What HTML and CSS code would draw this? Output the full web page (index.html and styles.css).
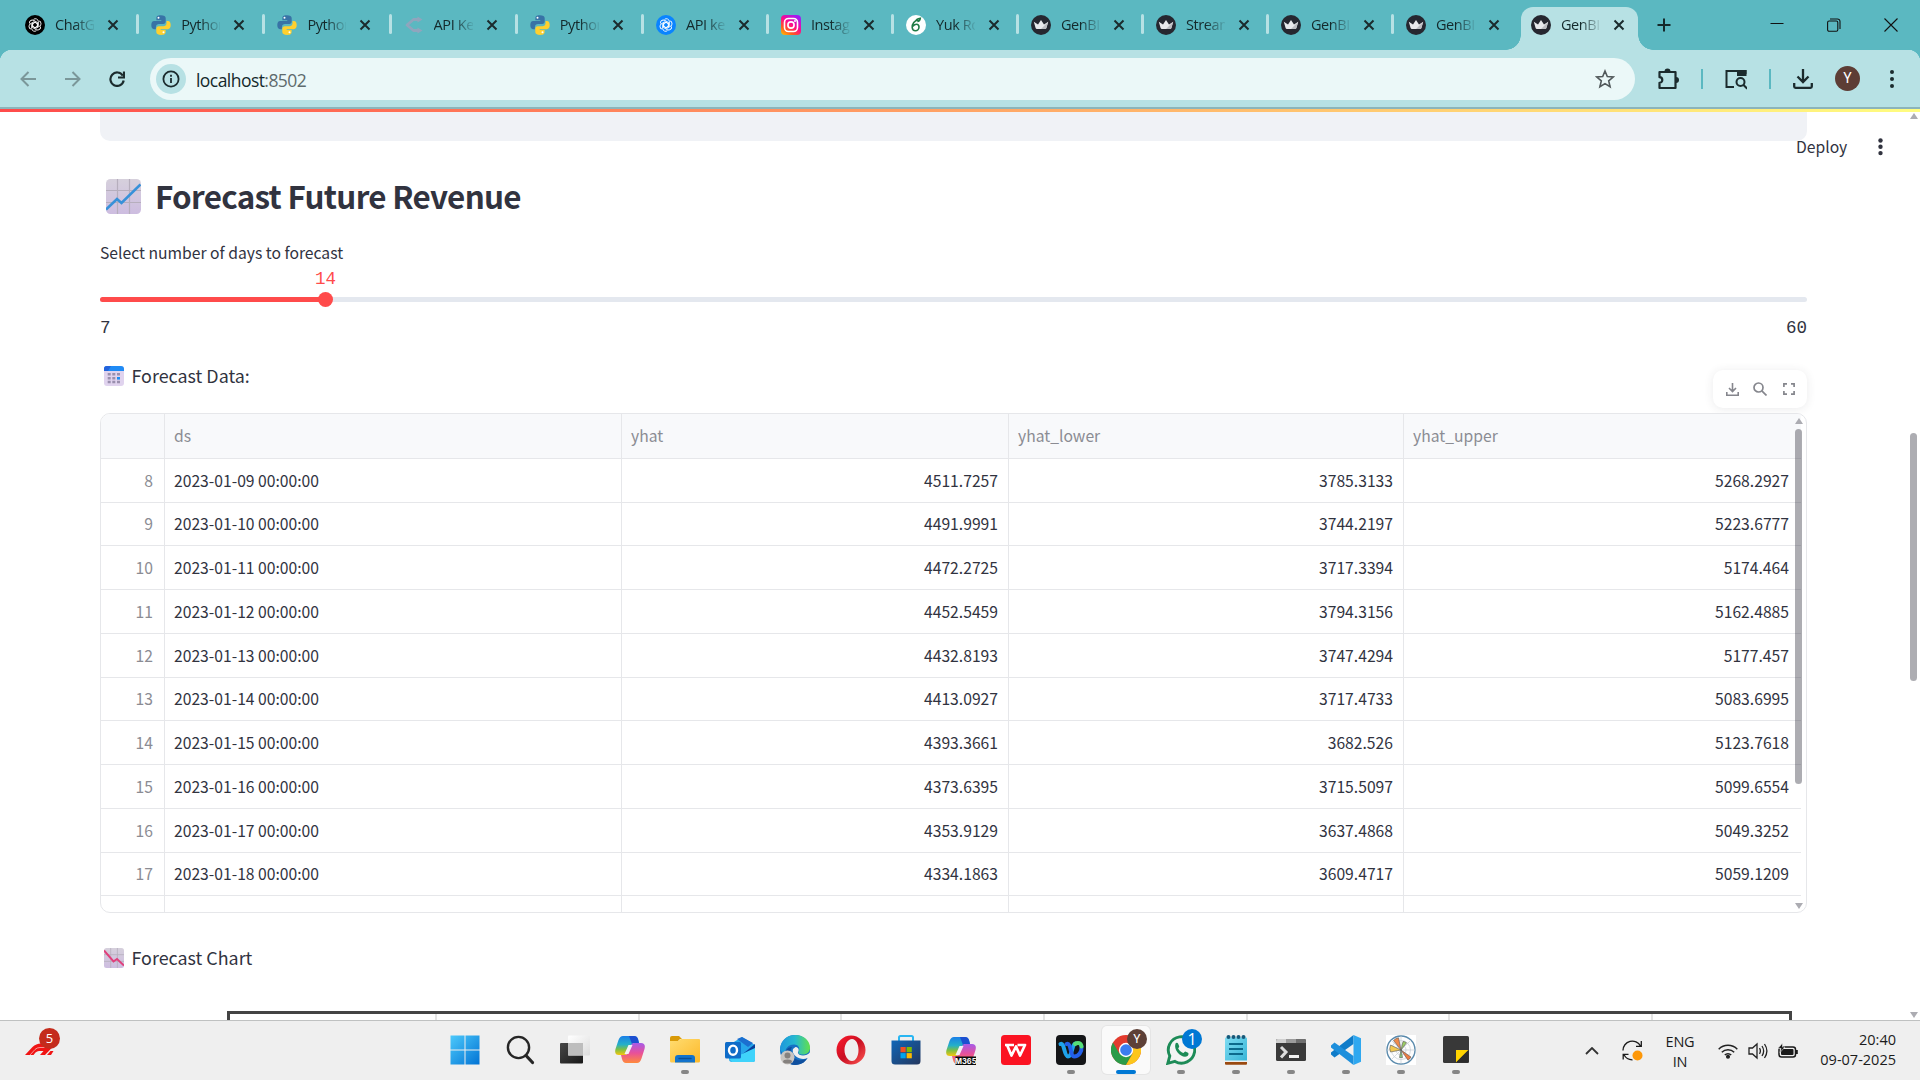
FILE: index.html
```html
<!DOCTYPE html>
<html lang="en">
<head>
<meta charset="utf-8">
<title>GenBI</title>
<link rel="stylesheet" href="styles.css">
</head>
<body>
<svg class="defs" width="0" height="0">
  <defs>
    <linearGradient id="gWin" x1="0" y1="0" x2="1" y2="1"><stop offset="0" stop-color="#4cc9fb"/><stop offset="1" stop-color="#0273d4"/></linearGradient>
    <linearGradient id="gPaper" x1="0" y1="0" x2="0" y2="1"><stop offset="0" stop-color="#d6d0dc"/><stop offset="1" stop-color="#cdbde0"/></linearGradient>
    <linearGradient id="gInsta" x1="0" y1="1" x2=".7" y2="0"><stop offset="0" stop-color="#ffc800"/><stop offset=".3" stop-color="#ff5a1f"/><stop offset=".6" stop-color="#ff0a8c"/><stop offset="1" stop-color="#a01cf5"/></linearGradient>
    <linearGradient id="gCopA" x1="0" y1="0" x2="0" y2="1"><stop offset="0" stop-color="#1a7fe8"/><stop offset=".45" stop-color="#25b0c8"/><stop offset=".7" stop-color="#7bbf45"/><stop offset="1" stop-color="#f6c60d"/></linearGradient>
    <linearGradient id="gCopB" x1="0" y1="0" x2="0" y2="1"><stop offset="0" stop-color="#a65be8"/><stop offset=".5" stop-color="#e8509a"/><stop offset="1" stop-color="#ff8a3c"/></linearGradient>
    <linearGradient id="gFold" x1="0" y1="0" x2="1" y2="1"><stop offset="0" stop-color="#ffdc70"/><stop offset="1" stop-color="#fdb92a"/></linearGradient>
    <linearGradient id="gEdge" x1="0" y1="0" x2="1" y2="0"><stop offset="0" stop-color="#1e96dc"/><stop offset=".5" stop-color="#25b9d0"/><stop offset="1" stop-color="#62e04c"/></linearGradient>
    <linearGradient id="gOpera" x1="0" y1="0" x2="1" y2="1"><stop offset="0" stop-color="#ff1b2d"/><stop offset=".5" stop-color="#c90f22"/><stop offset="1" stop-color="#ff5a55"/></linearGradient>
    <linearGradient id="gStore" x1="0" y1="0" x2="1" y2="1"><stop offset="0" stop-color="#0f66b8"/><stop offset="1" stop-color="#24375e"/></linearGradient>
    <linearGradient id="gNote" x1="0" y1="0" x2="1" y2="1"><stop offset="0" stop-color="#7fdcf2"/><stop offset="1" stop-color="#35b4d6"/></linearGradient>
    <linearGradient id="gGlass" x1="0" y1="0" x2="1" y2="1"><stop offset="0" stop-color="#fff"/><stop offset="1" stop-color="#dcdcdc"/></linearGradient>
    <linearGradient id="gDark" x1="0" y1="0" x2="1" y2="1"><stop offset="0" stop-color="#474747"/><stop offset="1" stop-color="#181818"/></linearGradient>

    <symbol id="close" viewBox="0 0 12 12"><path d="M1.500 1.500l9 9M10.500 1.500l-9 9" stroke="#1b2b2d" stroke-width="2" fill="none"/></symbol>
    <symbol id="knot" viewBox="0 0 20 20"><g fill="none" stroke="#fff" stroke-width="1.200">
      <path id="petal" d="M8 2.500a4 4 0 0 1 6.500 3v5.500L10 13.600 6.500 11.600"/><use href="#petal" transform="rotate(60 10 10)"/><use href="#petal" transform="rotate(120 10 10)"/><use href="#petal" transform="rotate(180 10 10)"/><use href="#petal" transform="rotate(240 10 10)"/><use href="#petal" transform="rotate(300 10 10)"/></g></symbol>
    <symbol id="python" viewBox="0 0 20 20">
      <path fill="#3873a6" d="M9.700.3C6.300.3 5.400 1.600 5.400 3.200v2h4.900v.8H3.200C1.300 6 .3 7.600.3 10.100s1 4.100 2.700 4.100h1.900v-2.300c0-1.700 1.400-3 3.100-3h4.300c1.400 0 2.400-1.100 2.400-2.500V3.200C14.700 1.500 13.200.3 9.700.3z"/>
      <path fill="#ffd02e" d="M10.300 19.900c3.400 0 4.300-1.300 4.300-2.900v-2H9.700v-.8h7.100c1.900 0 2.900-1.600 2.900-4.100S18.700 6 17 6h-1.500v2.300c0 1.700-1.400 3-3.100 3H7.700c-1.400 0-2.400 1.100-2.400 2.500V17c0 1.700 1.500 2.900 5 2.900z"/>
      <circle cx="7.500" cy="2.800" r="1" fill="#fff"/><circle cx="12.500" cy="17.300" r="1" fill="#fff"/></symbol>
    <symbol id="crown" viewBox="0 0 20 20"><circle cx="10" cy="10" r="10" fill="#262730"/><path d="M2.800 6.800l4.200 2.700L10 5l3 4.500 4.200-2.700L15.400 13q-.3 1-1.300 1H5.900q-1 0-1.300-1z" fill="#e9e9ec"/><path d="M10 14h4.100q1 0 1.300-1l1.800-6.200z" fill="#bdbdc2"/></symbol>
    <symbol id="copilot" viewBox="0 0 30 30"><path d="M8 1h11q3 0 4 3l1 4h-4q-3 0-4 3l-3 7q-1 2-3 2H4Q-1 20 .5 14L3.500 5Q5 1 8 1z" fill="url(#gCopA)"/><path d="M14 1h5q3 0 4 3l1 4h-4q-2 0-3 1z" fill="#1c4fd0"/><path d="M22 28H11q-3 0-4-4l-1-4h4q2 0 3-2l3-8q1-2 3-2h7q5 0 3.500 6l-3 9.500Q25 28 22 28z" fill="url(#gCopB)"/><path d="M13.500 10h4l-4 9h-4z" fill="#f3f1f5"/></symbol>
  </defs>
</svg>

<header class="tabstrip">
  <div class="tab wide"><svg class="fav"><circle cx="10" cy="10" r="10"/><use href="#knot" x="2.500" y="2.500" width="15" height="15"/></svg><span>ChatGPT</span><svg class="x"><use href="#close"/></svg></div>
  <div class="tab wide"><svg class="fav"><use href="#python"/></svg><span>Python</span><svg class="x"><use href="#close"/></svg></div>
  <div class="tab wide"><svg class="fav"><use href="#python"/></svg><span>Python</span><svg class="x"><use href="#close"/></svg></div>
  <div class="tab wide"><svg class="fav" viewBox="0 0 20 20"><path d="M15 4.500H9.500L3 10l6.500 5.500H15" fill="none" stroke="#8fa5bd" stroke-width="2.800" stroke-linejoin="round"/><path d="M13.500 1.500l5 3-5 3zM13.500 12.500l5 3-5 3z" fill="#8fa5bd"/></svg><span>API Keys</span><svg class="x"><use href="#close"/></svg></div>
  <div class="tab wide"><svg class="fav"><use href="#python"/></svg><span>Python</span><svg class="x"><use href="#close"/></svg></div>
  <div class="tab"><svg class="fav"><circle cx="10" cy="10" r="10" fill="#0a84ff"/><use href="#knot" x="2.500" y="2.500" width="15" height="15"/></svg><span>API keys</span><svg class="x"><use href="#close"/></svg></div>
  <div class="tab"><svg class="fav"><rect width="20" height="20" rx="4" fill="url(#gInsta)"/><rect x="3.500" y="3.500" width="13" height="13" rx="4" fill="none" stroke="#fff" stroke-width="1.600"/><circle cx="10" cy="10" r="3.100" fill="none" stroke="#fff" stroke-width="1.600"/><circle cx="14" cy="6" r="1" fill="#fff"/></svg><span>Instagram</span><svg class="x"><use href="#close"/></svg></div>
  <div class="tab"><svg class="fav"><circle cx="10" cy="10" r="10" fill="#fff"/><path d="M12.500 4.500C8.500 5.500 6 9 6.200 12.500c.2 2 1.500 3.300 3.200 3.300 2 0 3.600-1.700 3.600-3.700 0-1.700-1.100-2.800-2.600-2.800-1.300 0-2.500.8-3.500 2M9.500 6.500c.5-2 2.500-3 4.800-3.300-.2 1.700-1.300 3.300-3 3.300" fill="none" stroke="#1f7a45" stroke-width="1.600"/></svg><span>Yuk Ro</span><svg class="x"><use href="#close"/></svg></div>
  <div class="tab"><svg class="fav"><use href="#crown"/></svg><span>GenBI</span><svg class="x"><use href="#close"/></svg></div>
  <div class="tab"><svg class="fav"><use href="#crown"/></svg><span>Streamlit</span><svg class="x"><use href="#close"/></svg></div>
  <div class="tab"><svg class="fav"><use href="#crown"/></svg><span>GenBI</span><svg class="x"><use href="#close"/></svg></div>
  <div class="tab last"><svg class="fav"><use href="#crown"/></svg><span>GenBI</span><svg class="x"><use href="#close"/></svg></div>
  <div class="tab active"><svg class="fav"><use href="#crown"/></svg><span>GenBI</span><svg class="x"><use href="#close"/></svg></div>
  <svg class="newtab" width="14" height="14"><path d="M7 .5v13M.5 7h13" stroke="#15292b" stroke-width="2"/></svg>
  <div class="winctl">
    <svg width="14" height="14"><path d="M.5 5.500h13" stroke="#111"/></svg>
    <svg width="14" height="14" fill="none" stroke="#111" stroke-width="1.100"><rect x=".6" y="3" width="10.200" height="10.200" rx="1.500"/><path d="M3 1h7.500a2.500 2.500 0 0 1 2.500 2.500V11"/></svg>
    <svg width="14" height="14"><path d="M.5.5l13 13M13.500.5l-13 13" stroke="#111" stroke-width="1.100"/></svg>
  </div>
</header>

<nav class="toolbar">
  <svg class="nav" width="16" height="16" fill="none" stroke="#7b9799" stroke-width="2"><path d="M8.500 1L1.500 8l7 7M1.500 8H16"/></svg>
  <svg class="nav" width="16" height="16" fill="none" stroke="#7b9799" stroke-width="2"><path d="M7.500 1l7 7-7 7M14.500 8H0"/></svg>
  <svg class="nav" width="16" height="16" fill="none" stroke="#1b2b2d" stroke-width="2.200"><path d="M13.800 4.600A6.700 6.700 0 1 0 14.700 9.500"/><path d="M15 .5v6H9" /></svg>
  <div class="omnibox">
    <svg class="info" width="30" height="30"><circle cx="15" cy="15" r="15" fill="#b7e1e4"/><circle cx="15" cy="15" r="7.600" fill="none" stroke="#1b2b2d" stroke-width="1.800"/><path d="M15 14v5M15 10.700v2" stroke="#1b2b2d" stroke-width="1.800"/></svg>
    <div class="url">localhost<span>:8502</span></div>
    <svg class="star" width="20" height="20" viewBox="0 0 20 20"><path d="M10 2l2.300 5.500 5.900.5-4.500 3.900 1.400 5.800L10 14.600l-5.100 3.100 1.400-5.800L1.800 8l5.900-.5z" fill="none" stroke="#51595b" stroke-width="1.600"/></svg>
  </div>
  <div class="actions">
    <svg width="22" height="22" viewBox="0 0 22 22"><path d="M2.500 4h16v16h-16v-5.200a2.800 2.800 0 0 0 0-5.600z" fill="none" stroke="#1b2b2d" stroke-width="2.200" stroke-linejoin="round"/><path d="M7.500 3.500a3 3 0 0 1 6 0zM19 9a3 3 0 0 1 0 6z" fill="#1b2b2d"/></svg>
    <i></i>
    <svg width="22" height="22" viewBox="0 0 22 22"><path d="M9 19H1.500V3h19v3" fill="none" stroke="#1b2b2d" stroke-width="2"/><path d="M12 2h9.500v6H12z" fill="#1b2b2d"/><circle cx="15.500" cy="14" r="4" fill="none" stroke="#1b2b2d" stroke-width="2"/><path d="M18.300 16.800l4 4" stroke="#1b2b2d" stroke-width="2"/></svg>
    <i></i>
    <svg width="20" height="20"><path d="M10 0v12M4.500 7.500L10 13l5.500-5.500M1.200 14v3.500q0 1.300 1.300 1.300h15q1.300 0 1.300-1.300V14" fill="none" stroke="#1b2b2d" stroke-width="2.300"/></svg>
    <b>Y</b>
    <svg width="6" height="20" fill="#1b2b2d"><circle cx="3" cy="3" r="2"/><circle cx="3" cy="10" r="2"/><circle cx="3" cy="17" r="2"/></svg>
  </div>
</nav>

<main class="page">
  <div class="decor"></div>
  <div class="deploy"><span>Deploy</span><svg width="5" height="18" fill="#31333f"><circle cx="2.500" cy="2.500" r="2.200"/><circle cx="2.500" cy="8.800" r="2.200"/><circle cx="2.500" cy="15.100" r="2.200"/></svg></div>
  <section class="content">
    <div class="prevblock"></div>
    <h2><svg width="35" height="35" viewBox="0 0 35 35"><rect width="35" height="35" rx="4.500" fill="url(#gPaper)"/><path d="M11.500 0v35M23.500 0v35M0 11.500h35M0 23.500h35" stroke="#b6aebd" stroke-width="1.200"/><path d="M0 30.500l11-10.500 4.500 4L34.500 5.500" fill="none" stroke="#3791d9" stroke-width="2.600"/></svg>Forecast Future Revenue</h2>
    <label>Select number of days to forecast</label>
    <div class="slider">
      <div class="value"><span>14</span></div>
      <div class="track"><div class="fill"></div><div class="thumb"></div></div>
      <div class="limits"><span>7</span><span>60</span></div>
    </div>
    <div class="caption"><svg width="20" height="20"><rect width="20" height="20" rx="3" fill="#e0d3ee"/><path d="M0 5V3a3 3 0 0 1 3-3h14a3 3 0 0 1 3 3v2z" fill="#208bf5"/><path d="M0 5V3a3 3 0 0 1 3-3h4L4 5z" fill="#2463dc"/><g fill="#9a8fae"><path d="M3.700 7h3v2.600h-3zM8.300 7h3v2.600h-3zM13 7h3v2.600h-3zM3.700 11h3v2.600h-3zM8.300 11h3v2.600h-3zM3.700 14.800h3v2.400h-3zM8.300 14.800h3v2.400h-3zM13 14.800h3v2.400h-3z"/></g><path d="M13 11h3v2.600h-3z" fill="#1d8bf2"/></svg>Forecast Data:</div>

    <div class="frame">
      <div class="tools">
        <svg width="13" height="13" fill="none" stroke="#85868d" stroke-width="1.600"><path d="M6.500 0v8M3 5l3.500 3.500L10 5M.8 9v3.200h11.400V9"/></svg>
        <svg width="14" height="14" fill="none" stroke="#85868d" stroke-width="1.700"><circle cx="5.500" cy="5.500" r="4.500"/><path d="M8.800 8.800l4.700 4.700"/></svg>
        <svg width="12" height="12" fill="none" stroke="#85868d" stroke-width="1.700"><path d="M.9 4V.9H4M8 .9h3.100V4M11.100 8v3.100H8M4 11.100H.9V8"/></svg>
      </div>
      <div class="grid">
        <div class="row head"><div></div><div>ds</div><div>yhat</div><div>yhat_lower</div><div>yhat_upper</div></div>
        <div class="row"><div>8</div><div>2023-01-09 00:00:00</div><div>4511.7257</div><div>3785.3133</div><div>5268.2927</div></div>
        <div class="row"><div>9</div><div>2023-01-10 00:00:00</div><div>4491.9991</div><div>3744.2197</div><div>5223.6777</div></div>
        <div class="row"><div>10</div><div>2023-01-11 00:00:00</div><div>4472.2725</div><div>3717.3394</div><div>5174.464</div></div>
        <div class="row"><div>11</div><div>2023-01-12 00:00:00</div><div>4452.5459</div><div>3794.3156</div><div>5162.4885</div></div>
        <div class="row"><div>12</div><div>2023-01-13 00:00:00</div><div>4432.8193</div><div>3747.4294</div><div>5177.457</div></div>
        <div class="row"><div>13</div><div>2023-01-14 00:00:00</div><div>4413.0927</div><div>3717.4733</div><div>5083.6995</div></div>
        <div class="row"><div>14</div><div>2023-01-15 00:00:00</div><div>4393.3661</div><div>3682.526</div><div>5123.7618</div></div>
        <div class="row"><div>15</div><div>2023-01-16 00:00:00</div><div>4373.6395</div><div>3715.5097</div><div>5099.6554</div></div>
        <div class="row"><div>16</div><div>2023-01-17 00:00:00</div><div>4353.9129</div><div>3637.4868</div><div>5049.3252</div></div>
        <div class="row"><div>17</div><div>2023-01-18 00:00:00</div><div>4334.1863</div><div>3609.4717</div><div>5059.1209</div></div>
        <div class="row"><div></div><div></div><div></div><div></div><div></div></div>
        <div class="scroll"><i class="up"></i><b></b><i class="down"></i></div>
      </div>
    </div>

    <div class="caption chartcap"><svg width="20" height="20"><rect width="20" height="20" rx="2.500" fill="url(#gPaper)"/><path d="M6.700 0v20M13.400 0v20M0 6.700h20M0 13.400h20" stroke="#b6aebd" stroke-width=".8"/><path d="M0 2.500l9.500 11 3.500-2.500 7 6.500" fill="none" stroke="#e0407c" stroke-width="2"/></svg>Forecast Chart</div>
    <div class="plot"><i></i><i></i><i></i><i></i><i></i><i></i><i></i></div>
  </section>
  <div class="scroll pagescroll"><i class="up"></i><b></b><i class="down"></i></div>
</main>

<footer class="taskbar">
  <div class="widget"><svg width="32" height="12" viewBox="0 0 32 12"><path d="M0 12L7.500 4Q11 .5 16 .5h15L20 12h-5l3.500-4H14q-2 0-3.500 1.500L8.500 12z" fill="#f01414"/><path d="M5 12l5-5.500Q12 4.500 15 4.500h12" fill="none" stroke="#f7b5b5" stroke-width=".8"/><path d="M22 12l3.500-4h3L26 12z" fill="#f01414"/></svg><b>5</b></div>
  <div class="apps">
    <div><svg viewBox="0 0 30 30"><g fill="url(#gWin)"><path d="M.5.5h14v14H.5zM15.500.5h14v14h-14zM.5 15.500h14v14H.5zM15.500 15.500h14v14h-14z"/></g></svg></div>
    <div><svg viewBox="0 0 30 30" fill="none" stroke="#262626"><circle cx="13.500" cy="12.500" r="10.600" stroke-width="2.400"/><path d="M21 20.500l6.500 7" stroke-width="3.200" stroke-linecap="round"/></svg></div>
    <div><svg viewBox="0 0 30 30"><rect x="0" y="8" width="23" height="20.500" rx="1" fill="url(#gDark)"/><rect x="8" y=".5" width="22" height="20" rx="1" fill="url(#gGlass)"/><path d="M8 8h15v12.500H8z" fill="#bdbdbd"/></svg></div>
    <div><svg viewBox="0 0 30 30"><use href="#copilot"/></svg></div>
    <div class="run"><svg viewBox="0 0 30 30"><path d="M0 3q0-2 2-2h7l3 3h-2l-3 3H0z" fill="#d99a08"/><path d="M0 6h8l3-2h18q1 0 1 1v21q0 1.500-1.500 1.500h-27Q0 27.500 0 26z" fill="url(#gFold)"/><path d="M5 27.500V23q0-3 3-3h14q3 0 3 3v4.500z" fill="#1373cc"/><path d="M9 23.500h12" stroke="#0c4f96" stroke-width="1.400" stroke-linecap="round"/></svg></div>
    <div><svg viewBox="0 0 30 30"><path d="M4 10L17 2l13 8v15q0 2-2 2H7q-3 0-3-3z" fill="#27a6ea"/><path d="M12 4l11 8 5-4-11-6z" fill="#1b6fd0"/><path d="M14 22L30 9v5L16 26z" fill="#0a3f9a"/><path d="M4 24l13-5 13-6v12q0 2-2 2H7z" fill="#3fd3fb"/><rect x="0" y="7" width="16" height="16.500" rx="1.500" fill="#0f6cc8"/><ellipse cx="8" cy="15.200" rx="4" ry="4.600" fill="none" stroke="#fff" stroke-width="2.400"/></svg></div>
    <div><svg viewBox="0 0 30 30"><circle cx="15" cy="15" r="15" fill="#1570c4"/><path d="M0 14C1 4 8 0 15.500 0 24 0 30 6 30 12.500c0 4.500-3 7-7 7-4 0-5.500-1.500-4-4 1-3-1-6-5-6-6 0-9 4-9 9C2 17.500.5 16 0 14z" fill="url(#gEdge)"/><path d="M12 12c-3 4-1 11 6 13 4 1 8-1 9-2-1 3-5 7-12 7C8 30 3 24 5 18c1-4 4-6 7-6z" fill="#0f4f9e"/><path d="M15.500 12c3 0 4 3 2.500 5-.5 2 2 3.500 5 3.500 3 0 5.500-1 7.500-3.500V22l-3 1C21 26 11 21 13 14z" fill="#efefef"/><circle cx="7.500" cy="22.500" r="7" fill="#c8c5c2"/><circle cx="7.500" cy="20.500" r="3" fill="#85817e"/><ellipse cx="7.500" cy="26.500" rx="4.500" ry="2" fill="#85817e"/></svg></div>
    <div><svg viewBox="0 0 30 30"><path d="M15 .5a14.500 14.500 0 1 0 0 29 14.500 14.500 0 1 0 0-29zM16 4c4 0 6.500 5 6.500 11S20 26 16 26 8.500 21 8.500 15 12 4 16 4z" fill="url(#gOpera)" fill-rule="evenodd"/></svg></div>
    <div><svg viewBox="0 0 30 30"><path d="M8 8V2.500Q8 1 9.500 1h11Q22 1 22 2.500V8" fill="none" stroke="#29b6f2" stroke-width="2"/><path d="M.5 5.500h29V26q0 3.500-3.500 3.500H4Q.5 29.500.5 26z" fill="url(#gStore)"/><path d="M9.500 12h5.200v5.200H9.500z" fill="#f25022"/><path d="M15.600 12h5.200v5.200h-5.200z" fill="#7fba00"/><path d="M9.500 18.100h5.200v5.200H9.500z" fill="#00a4ef"/><path d="M15.600 18.100h5.200v5.200h-5.200z" fill="#ffb900"/></svg></div>
    <div><svg viewBox="0 0 30 30"><use href="#copilot" y="1"/><rect x="9.500" y="21.500" width="20.500" height="8.500" fill="#0b0b0b"/><text x="19.700" y="28.500" class="m365">M365</text></svg></div>
    <div><svg viewBox="0 0 30 30"><rect width="30" height="30" rx="3.500" fill="#fb1322"/><path d="M4 10h9M6 10l4.500 10.500L15 11.500l4 9L24 10h-7.500" fill="none" stroke="#fff" stroke-width="2.700" stroke-linejoin="round"/></svg></div>
    <div class="run"><svg viewBox="0 0 30 30"><rect width="30" height="30" rx="4" fill="#141517"/><path d="M4.500 9c4-2 3.500 12.500 7.500 12.500 4.500 0 3.500-12 7.500-13" fill="none" stroke="#1fa2ea" stroke-width="4" stroke-linecap="round"/><path d="M10.500 9c5-2 3.500 12.500 7.500 12.500 5 0 8-5 7.500-10" fill="none" stroke="#2360ea" stroke-width="4" stroke-linecap="round"/><path d="M19 9c3-2 6-1 6.500 2.500" fill="none" stroke="#57df78" stroke-width="4" stroke-linecap="round"/></svg></div>
    <div class="run on"><svg viewBox="0 0 30 30"><circle cx="15" cy="15" r="15" fill="#e33b2e"/><path d="M2 7.500A15 15 0 0 0 15 30l6.500-11.300L15 15 8.500 18.800z" fill="#2b9b48"/><path d="M28 7.500A15 15 0 0 1 15 30l6.500-11.300V7.500z" fill="#fcc61c"/><circle cx="15" cy="15" r="7.200" fill="#fff"/><circle cx="15" cy="15" r="5.800" fill="#3b7df0"/></svg><b class="user">Y</b></div>
    <div class="run"><svg viewBox="0 0 30 30"><path d="M1.800 28.300l2-7.300A13.200 13.200 0 1 1 9 26.400z" fill="#f4f4f4" stroke="#1d8b57" stroke-width="2.900"/><path d="M9.500 8.500c1-1.200 2.200-.8 2.700.3l1 2.400c.2.800-.9 1.600-1 2.200 1 2.300 3 3.800 5 4.600.7.100 1.300-1.500 2.200-1.500l2.600 1.300c1 .6.500 2.400-.5 3.200-4.500 3.500-14.500-5-12-12.500z" fill="#1d8b57"/></svg><b class="count">1</b></div>
    <div class="run"><svg viewBox="0 0 30 30"><rect x="4" y="25" width="22" height="4.800" rx="1" fill="#9a4a10"/><rect x="4" y="2.500" width="22" height="24.500" rx="1" fill="url(#gNote)"/><path d="M4 25.500h22v1.500H4z" fill="#eee"/><path d="M8 9h14M8 14h14M8 19h14" stroke="#0c6a8c" stroke-width="2"/><g fill="#15597a"><circle cx="7.500" cy="2" r="2"/><circle cx="12.500" cy="2" r="2"/><circle cx="17.500" cy="2" r="2"/><circle cx="22.500" cy="2" r="2"/></g></svg></div>
    <div class="run"><svg viewBox="0 0 30 30"><rect y="4" width="30" height="22" rx="1.500" fill="#3a3a3a"/><path d="M0 8V5.500Q0 4 1.500 4H10v4z" fill="#d0d0d0"/><path d="M10 4h10v4H10z" fill="#9c9c9c"/><path d="M20 4h8.500Q30 4 30 5.500V8H20z" fill="#6f6f6f"/><path d="M5 12l5 5-5 5.500" fill="none" stroke="#dcdcdc" stroke-width="3"/><path d="M13 21.500h10" stroke="#f2f2f2" stroke-width="3"/></svg></div>
    <div class="run"><svg viewBox="0 0 30 30"><path d="M22.500 0v9L3.500 22.500 0 19.500v-2z" fill="#0f7cc9"/><path d="M22.500 30v-9L3.500 7.500 0 10.500v2z" fill="#1d8fdc"/><path d="M22.500 0L30 3.300v23.400L22.500 30z" fill="#2fa8f0"/></svg></div>
    <div class="run"><svg viewBox="0 0 30 30"><path d="M0 0h30v30H0z" fill="#fff"/><circle cx="15" cy="15" r="14" fill="#fdfdfd" stroke="#5a8aac" stroke-width="1.400"/><g fill="none" stroke="#c4ccd2" stroke-width=".7"><circle cx="15" cy="15" r="9.500"/><circle cx="15" cy="15" r="5"/><path d="M1 15h28M15 1v28M5 5l20 20M25 5L5 25"/></g><g stroke="#555" stroke-width=".6"><path d="M15 15L7.500 5.500Q10 3 12.500 2.800z" fill="#f08a4b"/><path d="M15 15L4.500 17Q3 13.500 4.500 10z" fill="#f2c84f"/><path d="M15 15l10 7q-1 2-3 3.200z" fill="#ee7c42"/><path d="M15 15l2-8.500q2 0 3.500 1.300z" fill="#9cce62"/><path d="M15 15l1.500 7.500h-3z" fill="#8ccf7c"/></g></svg></div>
    <div class="run"><svg viewBox="0 0 30 30"><rect x="2" y="1" width="26" height="27" rx="1.500" fill="#383838"/><path d="M15 15h12.500L15 27.500z" fill="#ffd400"/><path d="M15 27.500L27.500 15v12.500z" fill="#2c2c2c"/></svg></div>
  </div>
  <div class="tray">
    <svg width="14" height="8" class="chev"><path d="M1 7l6-6 6 6" fill="none" stroke="#333" stroke-width="1.800"/></svg>
    <svg width="21" height="21" class="sync"><g fill="none" stroke="#1a1a1a" stroke-width="1.300"><path d="M1 10.500A9.300 9.300 0 0 1 18.500 6M19.300 1v5.300H14M10.500 19.800A9.300 9.300 0 0 1 2 14.800M1.200 19.500v-5.200h5.300"/></g><circle cx="15.500" cy="15.500" r="5" fill="#fd9708"/></svg>
    <div class="lang">ENG<br>IN</div>
    <svg width="20" height="16" class="wifi" fill="none" stroke="#222" stroke-width="1.500"><path d="M.7 6.200a13.200 13.200 0 0 1 18.600 0M3.800 9.200a8.800 8.800 0 0 1 12.400 0M6.800 12a4.500 4.500 0 0 1 6.400 0"/><circle cx="10" cy="13.800" r="1.300" fill="#222"/></svg>
    <svg width="20" height="18" class="vol" fill="none" stroke="#222" stroke-width="1.300"><path d="M1 6h3.500L9 2v14l-4.500-4H1z"/><path d="M11.500 6.200q1.800 2.800 0 5.600M14 4q3.300 5 0 10M16.500 2q4.800 7 0 14"/></svg>
    <svg width="20" height="16" class="bat"><rect x="1" y="4" width="16.500" height="10" rx="2.500" fill="none" stroke="#1a1a1a" stroke-width="1.500"/><rect x="3" y="6" width="12.500" height="6" rx="1" fill="#1a1a1a"/><path d="M18 7h1.800v4H18z" fill="#1a1a1a"/><path d="M4.500 0L0 5.500H3L2 9.500 7 4H4.500z" fill="#1a1a1a" stroke="#efefef" stroke-width=".6"/></svg>
    <div class="clock">20:40<br>09-07-2025</div>
  </div>
</footer>
</body>
</html>
```
FILE: styles.css
```css
* { box-sizing: border-box; }
body {
  margin: 0;
  width: 1920px;
  height: 1080px;
  overflow: hidden;
  display: flex;
  flex-direction: column;
  background: #fff;
  font-family: "Open Sans", "Noto Sans", sans-serif;
}
svg { display: block; flex: none; }
.defs { position: absolute; }

/* Browser tabs */
.tabstrip {
  height: 50px;
  flex: none;
  display: flex;
  background: #5bb8c1;
  padding-left: 15px;
}
.tab {
  position: relative;
  width: 125px;
  height: 43px;
  margin-top: 7px;
  padding-left: 10px;
  display: flex;
  align-items: center;
  flex: none;
}
.tab.wide { width: 126.200px; }
.tab::after {
  content: "";
  position: absolute;
  right: 2px;
  top: 7px;
  width: 3px;
  height: 20px;
  border-radius: 2px;
  background: #b7e1e4;
}
.tab.last::after { display: none; }
.tab > * { margin-bottom: 8px; }
.fav { width: 20px; height: 20px; }
.tab span {
  width: 39px;
  margin-left: 10px;
  overflow: hidden;
  white-space: nowrap;
  font-size: 14.500px;
  line-height: 22px;
  letter-spacing: -.4px;
  color: #14292b;
  -webkit-mask-image: linear-gradient(90deg, #000 50%, transparent 105%);
  mask-image: linear-gradient(90deg, #000 50%, transparent 105%);
}
.x { width: 12px; height: 12px; margin-left: 13px; }
.tab.active {
  width: 117px;
  border-radius: 12px 12px 0 0;
  background: #b7e1e4;
}
.tab.active::before, .tab.active::after {
  content: "";
  display: block;
  position: absolute;
  top: auto;
  bottom: 0;
  width: 15px;
  height: 15px;
  border-radius: 0;
}
.tab.active::before { left: -15px; background: radial-gradient(circle at 0 0, transparent 14.500px, #b7e1e4 15px); }
.tab.active::after { right: -15px; background: radial-gradient(circle at 100% 0, transparent 14.500px, #b7e1e4 15px); }
.newtab { margin: 18px 0 0 19px; }
.winctl { display: flex; gap: 43px; margin: 18px 22px 0 auto; }

/* Address bar */
.toolbar {
  height: 59px;
  flex: none;
  display: flex;
  align-items: center;
  padding: 0 0 0 20px;
  border-bottom: 2px solid #8cb4ba;
  background: radial-gradient(circle at 12px 12px, #b7e1e4 12px, #5bb8c1 12.500px) 0 0 / 12px 12px no-repeat,
    radial-gradient(circle at 0 12px, #b7e1e4 12px, #5bb8c1 12.500px) 100% 0 / 12px 12px no-repeat, #b7e1e4;
}
.nav { margin-right: 29px; }
.nav + .nav { margin-right: 28px; }
.nav:nth-child(3) { margin-right: 25px; }
.omnibox {
  width: 1485px;
  height: 42px;
  border-radius: 21px;
  background: #ebf8f8;
  display: flex;
  align-items: center;
  padding: 0 20px 0 6px;
}
.url { margin: 2px 0 0 10px; font-size: 17.500px; letter-spacing: -.55px; color: #14292b; }
.url span { color: #5e6b6d; }
.star { margin-left: auto; }
.actions { display: flex; align-items: center; gap: 22px; margin-left: 22px; }
.actions i { width: 2px; height: 20px; background: #5bb8c1; }
.actions b {
  width: 25px;
  height: 25px;
  margin-right: 7px;
  border-radius: 50%;
  background: #5d3d35;
  color: #fff;
  font: 400 14px/25px Roboto, sans-serif;
  text-align: center;
}

/* App page */
.page {
  position: relative;
  flex: 1;
  min-height: 0;
  overflow: hidden;
  color: #31333f;
  font-family: "Noto Sans CJK JP", "Noto Sans", sans-serif;
}
.decor { height: 3px; background: linear-gradient(90deg, #ff4b4b, #fffd80); }
.content { width: 1707px; margin-left: 100px; }
.prevblock { height: 29px; background: #f0f2f6; border-radius: 0 0 10px 10px; }
.deploy {
  position: absolute;
  top: 25px;
  left: 1796px;
  display: flex;
  align-items: center;
  gap: 31px;
  font-size: 15.700px;
  line-height: 26px;
}
h2 {
  margin: 28px 0 0;
  height: 53px;
  padding-left: 6px;
  display: flex;
  align-items: center;
  gap: 14px;
  font-size: 31.400px;
  font-weight: 600;
  line-height: 53px;
  letter-spacing: -.7px;
  white-space: nowrap;
}
h2 svg { margin-top: 2px; }
label { display: block; margin-top: 18px; font-size: 15.700px; line-height: 26px; }
.slider { font: 17.500px/20px "Liberation Mono", monospace; }
.value { margin: 3px 0 8px; width: 451px; text-align: center; color: #ff4b4b; }
.track { position: relative; height: 5px; border-radius: 3px; background: #e4e8ef; }
.fill { width: 225px; height: 5px; border-radius: 3px; background: #ff4b4b; }
.thumb { position: absolute; left: 217.500px; top: -5px; width: 15px; height: 15px; border-radius: 50%; background: #ff4b4b; }
.limits { margin-top: 16px; display: flex; justify-content: space-between; }
.caption {
  margin-top: 22px;
  padding-left: 4px;
  display: flex;
  align-items: center;
  gap: 7.500px;
  font-size: 17.900px;
  line-height: 30px;
}
.caption svg { margin-top: 2px; }

/* Data grid */
.frame { position: relative; margin-top: 23px; }
.tools {
  position: absolute;
  right: 0;
  top: -43px;
  width: 94px;
  height: 38px;
  border-radius: 10px;
  background: #fff;
  box-shadow: 0 1px 10px rgba(49, 51, 63, .1);
  display: flex;
  align-items: center;
  gap: 14px;
  padding-left: 12.500px;
}
.tools svg:last-child { margin-left: 2px; }
.grid {
  position: relative;
  height: 500px;
  border: 1px solid #e6e7ea;
  border-radius: 10px;
  overflow: hidden;
  font-size: 15.700px;
}
.row {
  display: grid;
  grid-template-columns: 64px 457px 387px 395px 397px;
  width: 1700px;
  height: 43.750px;
  line-height: 43px;
}
.row div {
  border-right: 1px solid #e6e7ea;
  border-bottom: 1px solid #e6e7ea;
  padding: 0 10px 0 9px;
  text-align: right;
  white-space: nowrap;
}
.row div:nth-child(2) { text-align: left; }
.row div:first-child { color: #8b8c93; padding-right: 11px; }
.row div:last-child { border-right: 0; padding-right: 12px; }
.row.head { height: 44.500px; line-height: 44px; background: #f8f9fb; color: #8b8c93; }
.head div { text-align: left; }

.scroll { position: absolute; right: 3px; top: 5px; bottom: 3px; width: 8px; }
.scroll i { position: absolute; left: 0; border: 4px solid transparent; }
.scroll .up { top: -1px; border-bottom: 6px solid #acacb2; border-top: 0; }
.scroll .down { bottom: 0; border-top: 6px solid #acacb2; border-bottom: 0; }
.scroll b { position: absolute; left: 0; top: 10px; width: 7px; height: 355px; border-radius: 4px; background: rgba(49, 51, 63, .4); }
.pagescroll { right: 2px; top: 5px; bottom: 2px; }
.pagescroll b { top: 319px; height: 248px; }

.chartcap { margin-top: 29px; }
.plot {
  margin: 39px 0 0 127px;
  width: 1565px;
  height: 200px;
  border: 3px solid #444;
  display: grid;
  grid-template-columns: 207px repeat(6, 202.700px) 1fr;
}
.plot i { border-right: 2px solid #e4e4e4; }

/* Taskbar */
.taskbar {
  position: relative;
  height: 60px;
  flex: none;
  display: flex;
  background: #efefef;
  border-top: 1px solid #bfc1c1;
  color: #1c1c1c;
}
.widget { position: relative; width: 437px; padding: 22px 0 0 25px; }
.widget b {
  position: absolute;
  left: 39px;
  top: 7px;
  width: 21px;
  height: 21px;
  border-radius: 50%;
  background: #c42b1c;
  color: #fff;
  font-size: 13px;
  font-weight: 400;
  line-height: 21px;
  text-align: center;
}
.apps { display: flex; }
.apps div { position: relative; width: 55.080px; padding: 14px 0 0 13px; }
.apps svg { width: 30px; height: 30px; position: relative; }
.run::after {
  content: "";
  position: absolute;
  left: 24px;
  top: 49px;
  width: 8px;
  height: 4px;
  border-radius: 2px;
  background: #868686;
}
.on::before {
  content: "";
  position: absolute;
  left: 4px;
  top: 5px;
  width: 48px;
  height: 48px;
  border-radius: 5px;
  background: #fafafa;
  box-shadow: 0 0 0 1px #e5e5e5;
}
.run.on::after { left: 18px; width: 20px; background: #0078d4; }
.apps b {
  position: absolute;
  left: 29px;
  top: 8px;
  width: 20px;
  height: 20px;
  border-radius: 50%;
  color: #fff;
  font-size: 16px;
  font-weight: 400;
  line-height: 20px;
  text-align: center;
}
.apps .user { background: #5d4037; font: 12px/20px Roboto, sans-serif; }
.apps .count { background: #0078d4; }
.m365 { font: 700 7.500px Inter, sans-serif; fill: #fff; text-anchor: middle; }
.tray { display: flex; align-items: center; margin-left: auto; padding-right: 24px; }
.chev { margin-right: 23px; }
.lang, .clock { font-size: 14.500px; line-height: 20px; }
.lang { width: 34px; margin: 2px 21px 0 20px; text-align: center; letter-spacing: -.2px; }
.wifi { margin-right: 10px; }
.vol { margin-right: 10px; }
.clock { margin: -1px 0 0 18px; width: 80px; text-align: right; }
```
